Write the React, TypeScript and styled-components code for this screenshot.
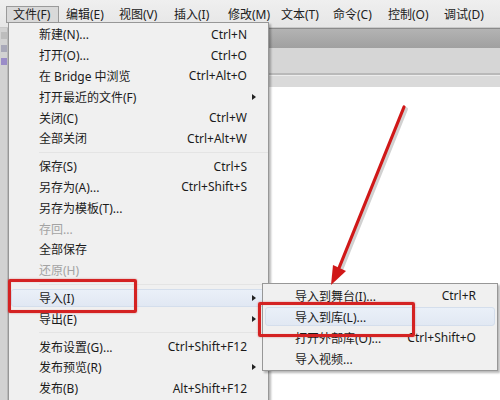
import React from "react";
import styled, { createGlobalStyle } from "styled-components";

const Global = createGlobalStyle`
  html, body { margin: 0; padding: 0; background: #ffffff; }
  * { box-sizing: border-box; }
`;

const Page = styled.div`
  position: relative;
  width: 500px;
  height: 400px;
  overflow: hidden;
  font-family: "Noto Sans", "Noto Sans CJK SC", sans-serif;
  font-size: 12px;
  color: #1b1b1b;
  display: flex;
  flex-direction: column;
  background: #ffffff;
`;

const MenuBar = styled.div`
  height: 28px;
  flex: none;
  display: flex;
  align-items: center;
  padding: 1px 0 0 6px;
  background: linear-gradient(#efefef, #e6e6e6);
  border-bottom: 1px solid #c9c9c9;
`;

const BarItem = styled.div<{ $pressed?: boolean; $w: number }>`
  flex: none;
  width: ${(p) => p.$w}px;
  height: 17px;
  line-height: 15px;
  padding-left: 6px;
  border: 1px solid ${(p) => (p.$pressed ? "#9a9a9a" : "transparent")};
  background: ${(p) => (p.$pressed ? "#d9d9d9" : "transparent")};
  color: #202020;
  white-space: nowrap;
`;

const Workspace = styled.div`
  flex: 1;
  display: flex;
  min-height: 0;
`;

const ToolStrip = styled.div`
  width: 8px;
  flex: none;
  display: flex;
  flex-direction: column;
  gap: 6px;
  padding-top: 4px;
  background: #d2d2d2;
  border-right: 1px solid #b9b9b9;
`;

const ToolMark = styled.div<{ $c: string }>`
  width: 6px;
  height: 7px;
  margin-left: 1px;
  background: ${(p) => p.$c};
`;

const Stage = styled.div`
  flex: 1;
  display: flex;
  flex-direction: column;
`;

const DocTabs = styled.div`
  height: 20px;
  flex: none;
  border-top: 1px solid #8a8a8a;
  background: linear-gradient(#b3b3b3, #a0a0a0);
`;

const EditBar = styled.div`
  height: 27px;
  flex: none;
  background: #d6d6d6;
  border-bottom: 2px solid #b9b9b9;
`;

const RulerStrip = styled.div`
  height: 12px;
  flex: none;
  background: #dadada;
  border-top: 1px solid #ececec;
`;

const Canvas = styled.div`
  flex: 1;
  background: #ffffff;
`;

const Menu = styled.div<{ $left: number; $top: number; $width: number }>`
  position: absolute;
  left: ${(p) => p.$left}px;
  top: ${(p) => p.$top}px;
  width: ${(p) => p.$width}px;
  background: #f0f0f0;
  border: 1px solid #979797;
  padding: 1px 0;
  box-shadow: 2px 2px 2px rgba(0, 0, 0, 0.28);
`;

const Row = styled.div<{ $h: number; $active?: boolean; $disabled?: boolean; $pl: number }>`
  position: relative;
  height: ${(p) => p.$h}px;
  display: grid;
  grid-template-columns: 1fr auto 18px;
  align-items: center;
  padding-left: ${(p) => p.$pl}px;
  padding-right: 3px;
  color: ${(p) => (p.$disabled ? "#a3a3a3" : "#1b1b1b")};
  white-space: nowrap;
  &::before {
    content: "";
    position: absolute;
    inset: 1px 2px;
    border-radius: 3px;
    background: ${(p) => (p.$active ? "linear-gradient(#eaf0f8, #e1e8f3)" : "transparent")};
    border: 1px solid ${(p) => (p.$active ? "#d4deec" : "transparent")};
  }
`;

const Label = styled.span`
  position: relative;
`;

const Shortcut = styled.span`
  position: relative;
  text-align: right;
`;

const SubArrow = styled.span`
  position: relative;
  justify-self: start;
  margin-left: 5px;
  width: 0;
  height: 0;
  border-top: 3.5px solid transparent;
  border-bottom: 3.5px solid transparent;
  border-left: 4px solid #222;
`;

const Separator = styled.div`
  height: 7px;
  display: flex;
  align-items: center;
  padding-left: 30px;
  &::after {
    content: "";
    flex: 1;
    height: 1px;
    background: #e4e4e4;
  }
`;

const Callout = styled.div<{ $left: number; $top: number; $w: number; $h: number }>`
  position: absolute;
  left: ${(p) => p.$left}px;
  top: ${(p) => p.$top}px;
  width: ${(p) => p.$w}px;
  height: ${(p) => p.$h}px;
  border: 3px solid #d42222;
  border-radius: 2px;
  box-shadow: 0 0 2px rgba(190, 0, 0, 0.45), inset 0 0 1px rgba(190, 0, 0, 0.4);
  pointer-events: none;
  z-index: 2;
`;

const ArrowLayer = styled.svg`
  position: absolute;
  left: 0;
  top: 0;
  width: 500px;
  height: 400px;
  pointer-events: none;
  z-index: 3;
`;

type Item =
  | { sep: true }
  | { sep?: false; label: string; key?: string; sub?: boolean; disabled?: boolean; active?: boolean; callout?: boolean };

const fileItems: Item[] = [
  { label: "新建(N)...", key: "Ctrl+N" },
  { label: "打开(O)...", key: "Ctrl+O" },
  { label: "在 Bridge 中浏览", key: "Ctrl+Alt+O" },
  { label: "打开最近的文件(F)", sub: true },
  { label: "关闭(C)", key: "Ctrl+W" },
  { label: "全部关闭", key: "Ctrl+Alt+W" },
  { sep: true },
  { label: "保存(S)", key: "Ctrl+S" },
  { label: "另存为(A)...", key: "Ctrl+Shift+S" },
  { label: "另存为模板(T)..." },
  { label: "存回...", disabled: true },
  { label: "全部保存" },
  { label: "还原(H)", disabled: true },
  { sep: true },
  { label: "导入(I)", sub: true, active: true, callout: true },
  { label: "导出(E)", sub: true },
  { sep: true },
  { label: "发布设置(G)...", key: "Ctrl+Shift+F12" },
  { label: "发布预览(R)", sub: true },
  { label: "发布(B)", key: "Alt+Shift+F12" },
];

const importItems: Item[] = [
  { label: "导入到舞台(I)...", key: "Ctrl+R" },
  { label: "导入到库(L)...", active: true, callout: true },
  { label: "打开外部库(O)...", key: "Ctrl+Shift+O" },
  { label: "导入视频..." },
];

const barItems: { t: string; w: number }[] = [
  { t: "文件(F)", w: 53 },
  { t: "编辑(E)", w: 53 },
  { t: "视图(V)", w: 55 },
  { t: "插入(I)", w: 54 },
  { t: "修改(M)", w: 53 },
  { t: "文本(T)", w: 52 },
  { t: "命令(C)", w: 55 },
  { t: "控制(O)", w: 56 },
  { t: "调试(D)", w: 56 },
];

function MenuRows({ items, h, pl, callout }: { items: Item[]; h: number; pl: number; callout: { left: number; top: number; w: number; h: number } }) {
  return (
    <>
      {items.map((it, i) =>
        it.sep ? (
          <Separator key={i} />
        ) : (
          <Row key={i} $h={h} $pl={pl} $active={it.active} $disabled={it.disabled}>
            <Label>{it.label}</Label>
            <Shortcut>{it.key ?? ""}</Shortcut>
            {it.sub ? <SubArrow /> : <span />}
            {it.callout && <Callout $left={callout.left} $top={callout.top} $w={callout.w} $h={callout.h} />}
          </Row>
        )
      )}
    </>
  );
}

export default function App() {
  return (
    <>
      <Global />
      <Page>
        <MenuBar>
          {barItems.map((b, i) => (
            <BarItem key={b.t} $w={b.w} $pressed={i === 0}>
              {b.t}
            </BarItem>
          ))}
        </MenuBar>
        <Workspace>
          <ToolStrip>
            <ToolMark $c="#bdbdbd" />
            <ToolMark $c="#a8a8b8" />
            <ToolMark $c="#9a8cc8" />
          </ToolStrip>
          <Stage>
            <DocTabs />
            <EditBar />
            <RulerStrip />
            <Canvas />
          </Stage>
        </Workspace>

        <Menu $left={8} $top={22} $width={261}>
          <MenuRows items={fileItems} h={20.8} pl={30} callout={{ left: -1, top: -9, w: 129, h: 34 }} />
        </Menu>

        <Menu $left={262} $top={283} $width={236}>
          <MenuRows items={importItems} h={21} pl={32} callout={{ left: -5, top: -4, w: 157, h: 35 }} />
        </Menu>

        <ArrowLayer viewBox="0 0 500 400">
          <line x1={406} y1={109} x2={341} y2={270} stroke="rgba(0,0,0,0.18)" strokeWidth={4} strokeLinecap="round" />
          <line x1={404} y1={107} x2={339} y2={268} stroke="#d01818" strokeWidth={3.2} strokeLinecap="round" />
          <polygon points="331,285 346,271 333,265" fill="#d01818" />
        </ArrowLayer>
      </Page>
    </>
  );
}
